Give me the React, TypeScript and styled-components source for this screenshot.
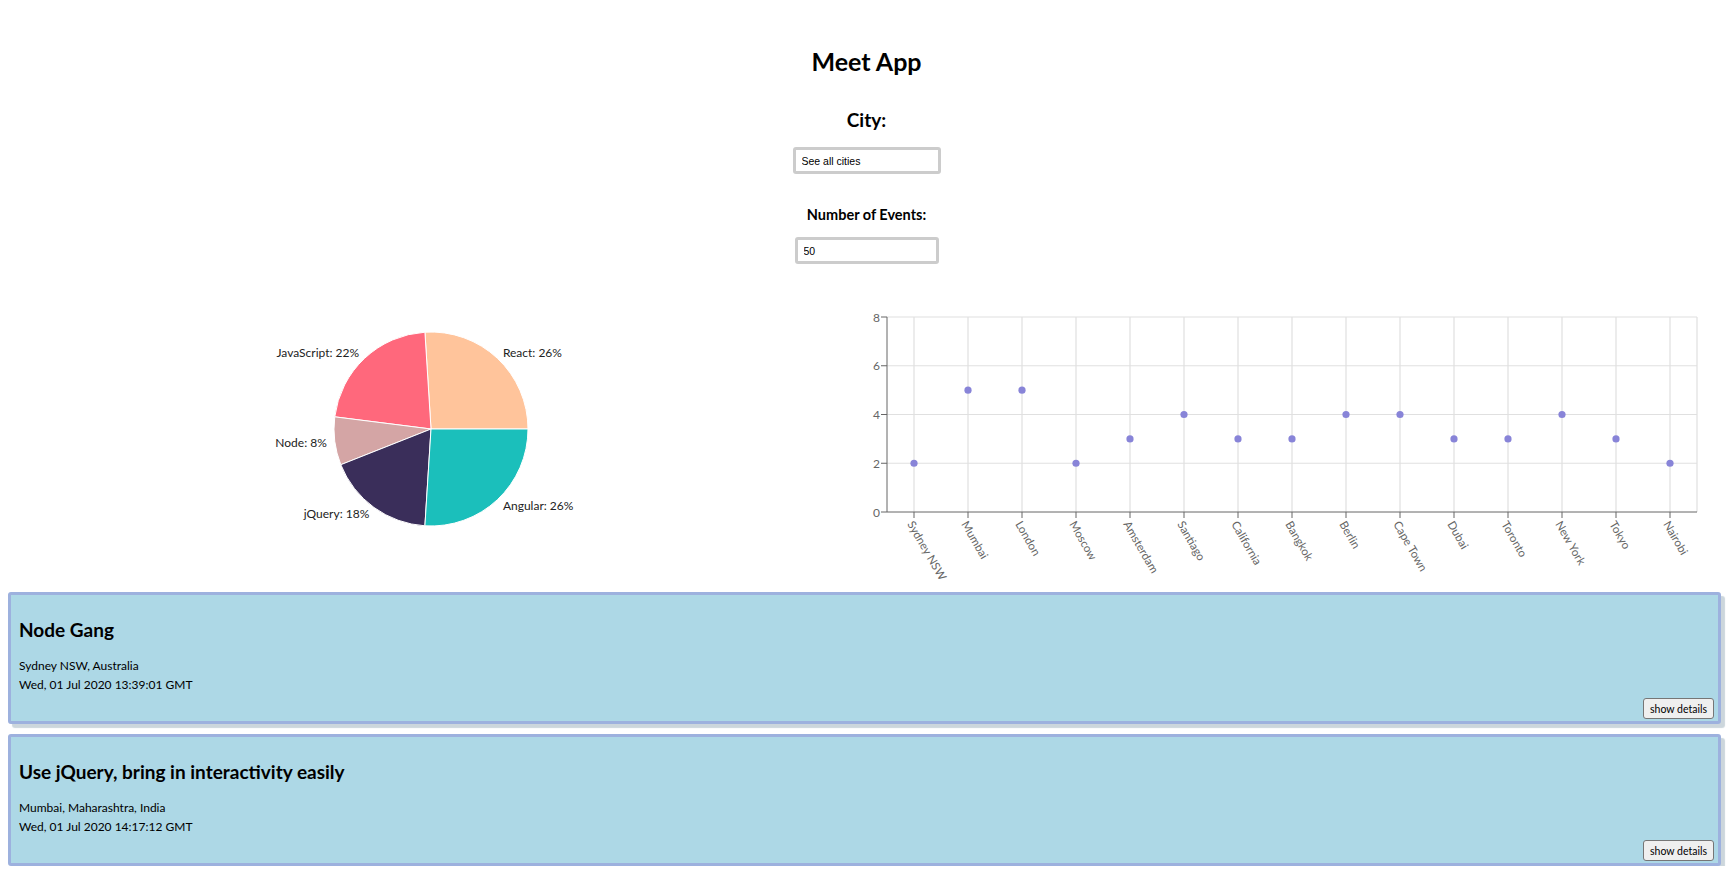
import React from "react";
import styled, { createGlobalStyle } from "styled-components";

const UI_FONT = `Lato, "Open Sans", "Liberation Sans", sans-serif`;

const GlobalStyle = createGlobalStyle`
  html, body {
    margin: 0;
    padding: 0;
    background: #ffffff;
  }
  body {
    font-family: ${UI_FONT};
    color: #000;
  }
`;

const Page = styled.div`
  padding: 0 8px;
  display: flex;
  flex-direction: column;
`;

const Header = styled.header`
  display: flex;
  flex-direction: column;
  align-items: center;
`;

const Title = styled.h1`
  margin: 46px 0 0;
  font-size: 25px;
  line-height: 30px;
  font-weight: 700;
`;

const FieldLabel = styled.h3<{ $size: number; $line: number; $gap: number }>`
  margin: ${(p) => p.$gap}px 0 0;
  font-size: ${(p) => p.$size}px;
  line-height: ${(p) => p.$line}px;
  font-weight: 700;
`;

const TextField = styled.input<{ $width: number; $gap: number }>`
  box-sizing: border-box;
  margin-top: ${(p) => p.$gap}px;
  width: ${(p) => p.$width}px;
  height: 27px;
  border: 3px solid #cccccc;
  border-radius: 3px;
  padding: 0 6px;
  font-family: "Liberation Sans", Arial, sans-serif;
  font-size: 10.5px;
  color: #000;
  background: #fff;
  outline: none;
`;

const ChartsRow = styled.section`
  display: grid;
  grid-template-columns: 858px 1fr;
  height: 328px;
`;

const ChartPanel = styled.div`
  min-width: 0;
  svg {
    display: block;
    overflow: visible;
  }
`;

const EventList = styled.ul`
  list-style: none;
  margin: 0;
  padding: 0;
  display: flex;
  flex-direction: column;
  gap: 10px;
`;

const EventCard = styled.li`
  box-sizing: border-box;
  margin-right: 4px;
  height: 132px;
  display: flex;
  flex-direction: column;
  padding: 23px 4px 2px 8px;
  background: #add8e6;
  border: 3px solid #9db1de;
  border-radius: 3px;
  box-shadow: 4px 4px 1px #ccd6dc;
`;

const EventTitle = styled.h3`
  margin: 0;
  font-size: 19px;
  line-height: 24px;
  font-weight: 700;
`;

const EventMeta = styled.p<{ $gap: number }>`
  margin: ${(p) => p.$gap}px 0 0;
  font-size: 12px;
  line-height: 19px;
`;

const DetailsButton = styled.button`
  align-self: flex-end;
  margin-top: auto;
  height: 21px;
  padding: 0 6px;
  font-family: ${UI_FONT};
  font-size: 10.5px;
  color: #000;
  background: #efefef;
  border: 1px solid #767676;
  border-radius: 3px;
`;

const ChartText = styled.text`
  font-family: ${UI_FONT};
`;

type Slice = { name: string; value: number; color: string };

const pieData: Slice[] = [
  { name: "React", value: 26, color: "#FFC49B" },
  { name: "JavaScript", value: 22, color: "#FF687C" },
  { name: "Node", value: 8, color: "#D4A5A5" },
  { name: "jQuery", value: 18, color: "#3A2E5A" },
  { name: "Angular", value: 26, color: "#1BBFBB" },
];

const rad = (d: number) => (d * Math.PI) / 180;

function PieChart() {
  const cx = 423;
  const cy = 165;
  const r = 97;
  const labelR = 105;
  const total = pieData.reduce((s, d) => s + d.value, 0);
  let start = 0;
  const pt = (a: number, rr: number) => [cx + rr * Math.cos(rad(a)), cy - rr * Math.sin(rad(a))];
  return (
    <svg width="858" height="328">
      {pieData.map((d) => {
        const sweep = (d.value / total) * 360;
        const a0 = start;
        const a1 = start + sweep;
        start = a1;
        const [x0, y0] = pt(a0, r);
        const [x1, y1] = pt(a1, r);
        const mid = (a0 + a1) / 2;
        const [lx, ly] = pt(mid, labelR);
        const anchor = lx > cx ? "start" : "end";
        return (
          <g key={d.name}>
            <path
              d={`M${cx},${cy} L${x0},${y0} A${r},${r} 0 ${sweep > 180 ? 1 : 0} 0 ${x1},${y1} Z`}
              fill={d.color}
              stroke="#fff"
              strokeWidth={1}
            />
            <ChartText x={lx} y={ly} textAnchor={anchor} dominantBaseline="central" fontSize="12" fill="#222">
              {`${d.name}: ${d.value}%`}
            </ChartText>
          </g>
        );
      })}
    </svg>
  );
}

const cityData: [string, number][] = [
  ["Sydney NSW", 2],
  ["Mumbai", 5],
  ["London", 5],
  ["Moscow", 2],
  ["Amsterdam", 3],
  ["Santiago", 4],
  ["California", 3],
  ["Bangkok", 3],
  ["Berlin", 4],
  ["Cape Town", 4],
  ["Dubai", 3],
  ["Toronto", 3],
  ["New York", 4],
  ["Tokyo", 3],
  ["Nairobi", 2],
];

function ScatterChart() {
  const left = 21;
  const right = 831;
  const top = 53;
  const bottom = 248;
  const band = (right - left) / cityData.length;
  const yOf = (v: number) => bottom - (v / 8) * (bottom - top);
  const xOf = (i: number) => left + band / 2 + band * i;
  const grid = "#e0e0e0";
  const axis = "#666";
  return (
    <svg width="859" height="328">
      {[2, 4, 6, 8].map((v) => (
        <line key={`h${v}`} x1={left} x2={right} y1={yOf(v)} y2={yOf(v)} stroke={grid} strokeWidth={1.2} />
      ))}
      {cityData.map((_, i) => (
        <line key={`v${i}`} x1={xOf(i)} x2={xOf(i)} y1={top} y2={bottom} stroke={grid} strokeWidth={1.2} />
      ))}
      <line x1={right} x2={right} y1={top} y2={bottom} stroke={grid} strokeWidth={1.2} />
      <line x1={left} x2={left} y1={top} y2={bottom} stroke={axis} />
      <line x1={left} x2={right} y1={bottom} y2={bottom} stroke={axis} />
      {[0, 2, 4, 6, 8].map((v) => (
        <g key={`yt${v}`}>
          <line x1={left - 6} x2={left} y1={yOf(v)} y2={yOf(v)} stroke={axis} />
          <ChartText x={left - 7} y={yOf(v)} textAnchor="end" dominantBaseline="central" fontSize="12" fill={axis}>
            {v}
          </ChartText>
        </g>
      ))}
      {cityData.map(([name], i) => (
        <g key={`xt${name}`}>
          <line x1={xOf(i)} x2={xOf(i)} y1={bottom} y2={bottom + 6} stroke={axis} />
          <ChartText
            x={xOf(i)}
            y={bottom + 8}
            dy="0.71em"
            textAnchor="start"
            fontSize="11.5"
            fill={axis}
            transform={`rotate(60, ${xOf(i)}, ${bottom + 8})`}
          >
            {name}
          </ChartText>
        </g>
      ))}
      {cityData.map(([name, v], i) => (
        <circle key={`d${name}`} cx={xOf(i)} cy={yOf(v)} r={3.6} fill="#8884d8" />
      ))}
    </svg>
  );
}

const events = [
  {
    title: "Node Gang",
    location: "Sydney NSW, Australia",
    date: "Wed, 01 Jul 2020 13:39:01 GMT",
  },
  {
    title: "Use jQuery, bring in interactivity easily",
    location: "Mumbai, Maharashtra, India",
    date: "Wed, 01 Jul 2020 14:17:12 GMT",
  },
];

export default function App() {
  return (
    <>
      <GlobalStyle />
      <Page>
        <Header>
          <Title>Meet App</Title>
          <FieldLabel $size={19} $line={24} $gap={32}>City:</FieldLabel>
          <TextField $width={148} $gap={15} defaultValue="See all cities" />
          <FieldLabel $size={14.5} $line={20} $gap={31}>Number of Events:</FieldLabel>
          <TextField $width={144} $gap={12} defaultValue="50" />
        </Header>
        <ChartsRow>
          <ChartPanel>
            <PieChart />
          </ChartPanel>
          <ChartPanel>
            <ScatterChart />
          </ChartPanel>
        </ChartsRow>
        <EventList>
          {events.map((e) => (
            <EventCard key={e.title}>
              <EventTitle>{e.title}</EventTitle>
              <EventMeta $gap={14}>{e.location}</EventMeta>
              <EventMeta $gap={0}>{e.date}</EventMeta>
              <DetailsButton>show details</DetailsButton>
            </EventCard>
          ))}
        </EventList>
      </Page>
    </>
  );
}
